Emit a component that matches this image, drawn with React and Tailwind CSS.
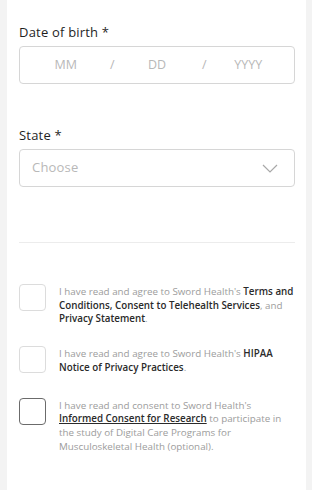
import { useState } from 'react';

const Checkbox = ({ checked, onChange, dark }) => (
  <button
    onClick={onChange}
    className={`w-[27px] h-[27px] shrink-0 rounded-[4px] border bg-white ${dark ? 'border-[#6b6b6b]' : 'border-[#dcdcdc]'}`}
  />
);

const App = () => {
  const [checks, setChecks] = useState([false, false, false]);
  const toggle = (i) => setChecks(checks.map((c, j) => (j === i ? !c : c)));

  return (
    <div className="w-[312px] h-[490px] bg-[#f3f3f3] overflow-hidden" style={{ fontFamily: '"Open Sans", "Liberation Sans", sans-serif' }}>
      <div className="ml-[7px] w-[299px] h-full bg-white pl-[12px] pr-[11px] pt-[24px]">
        {/* Date of birth */}
        <label className="block text-[13px] leading-[16px] text-[#1f1f1f] font-medium tracking-[0.2px]">Date of birth *</label>
        <div className="mt-[6px] h-[38px] border border-[#d6d6d6] rounded-[4px] grid grid-cols-3 items-center relative text-[12.5px] text-[#b8b8b8]">
          <span className="text-center">MM</span>
          <span className="text-center">DD</span>
          <span className="text-center">YYYY</span>
          <span className="absolute left-[90px] top-1/2 -translate-y-1/2">/</span>
          <span className="absolute left-[182px] top-1/2 -translate-y-1/2">/</span>
        </div>

        {/* State */}
        <label className="block mt-[43px] text-[13px] leading-[16px] text-[#1f1f1f] font-medium tracking-[0.2px]">State *</label>
        <div className="mt-[6px] h-[38px] border border-[#d6d6d6] rounded-[4px] flex items-center justify-between pl-[12px] pr-[16px]">
          <span className="text-[13px] text-[#b8b8b8] tracking-[0.2px]">Choose</span>
          <svg className="w-[16px] h-[9px]" viewBox="0 0 16 9" fill="none" stroke="#a8a8a8" strokeWidth="1.2">
            <path d="M1 1l7 7 7-7" />
          </svg>
        </div>

        <div className="mt-[55px] border-t border-[#ececec]" />

        {/* Consents */}
        <div className="mt-[41px] flex flex-col text-[9.8px] leading-[13.7px] text-[#9c9c9c]">
          <div className="flex gap-[13px]">
            <Checkbox checked={checks[0]} onChange={() => toggle(0)} />
            <p className="pt-[1px]">
              I have read and agree to Sword Health's <b className="font-semibold text-[#2a2a2a]">Terms and Conditions</b>
              <span className="text-[#2a2a2a] font-semibold">,</span> <b className="font-semibold text-[#2a2a2a]">Consent to Telehealth Services</b>, and{' '}
              <b className="font-semibold text-[#2a2a2a]">Privacy Statement</b>.
            </p>
          </div>
          <div className="flex gap-[13px] mt-[20px]">
            <Checkbox checked={checks[1]} onChange={() => toggle(1)} />
            <p className="pt-[1px]">
              I have read and agree to Sword Health's <b className="font-semibold text-[#2a2a2a]">HIPAA Notice of Privacy Practices</b>.
            </p>
          </div>
          <div className="flex gap-[13px] mt-[23px]">
            <Checkbox checked={checks[2]} onChange={() => toggle(2)} dark />
            <p className="pt-[1px]">
              I have read and consent to Sword Health's{' '}
              <a className="font-semibold text-[#2a2a2a] underline">Informed Consent for Research</a> to participate in the
              study of Digital Care Programs for Musculoskeletal Health (optional).
            </p>
          </div>
        </div>
      </div>
    </div>
  );
};

export default App;
